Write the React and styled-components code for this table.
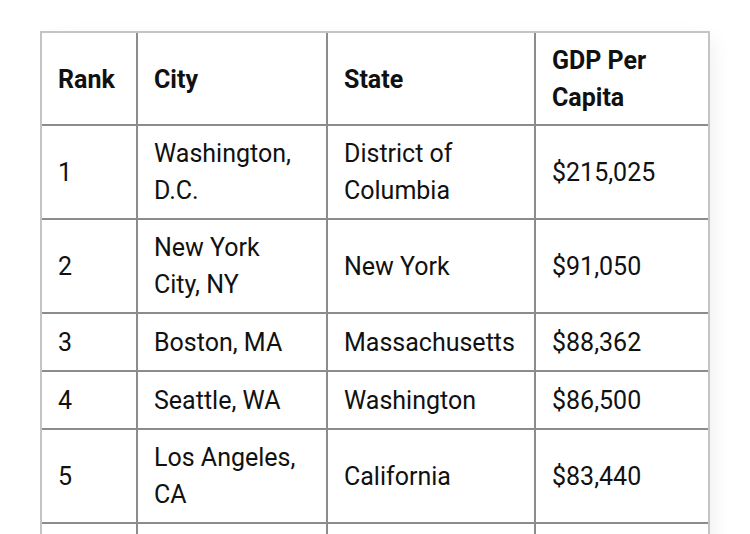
import React from "react";
import styled, { createGlobalStyle } from "styled-components";

const GlobalStyle = createGlobalStyle`
	html, body {
		margin: 0;
		padding: 0;
		background: #ffffff;
		overflow: hidden;
	}
	body {
		font-family: Roboto, "Liberation Sans", sans-serif;
		color: #111111;
	}
`;

const rows = [
	["1", "Washington, D.C.", "District of Columbia", "$215,025"],
	["2", "New York City, NY", "New York", "$91,050"],
	["3", "Boston, MA", "Massachusetts", "$88,362"],
	["4", "Seattle, WA", "Washington", "$86,500"],
	["5", "Los Angeles, CA", "California", "$83,440"],
];

const App = () => {
	return (
		<Page>
			<GlobalStyle />
			<Frame>
				<Table>
					<colgroup>
						<col style={{ width: 95 }} />
						<col style={{ width: 190 }} />
						<col style={{ width: 208 }} />
						<col style={{ width: 173 }} />
					</colgroup>
					<thead>
						<tr>
							<Head>Rank</Head>
							<Head>City</Head>
							<Head>State</Head>
							<Head>GDP Per Capita</Head>
						</tr>
					</thead>
					<tbody>
						{rows.map((r) => (
							<tr key={r[0]}>
								{r.map((c, i) => (
									<Cell key={i}>{c}</Cell>
								))}
							</tr>
						))}
						<tr>
							<Cell />
							<Cell />
							<Cell />
							<Cell />
						</tr>
					</tbody>
				</Table>
			</Frame>
		</Page>
	);
};

const Page = styled.div`
	height: 534px;
	padding: 31px 0 0 40px;
	box-sizing: border-box;
`;

const Frame = styled.div`
	width: 666px;
	box-shadow: 10px 0 20px -8px rgba(0, 0, 0, 0.07);
	border: 2px solid #c4c4c4;
	border-bottom: none;
`;

const Table = styled.table`
	width: 100%;
	border-collapse: collapse;
	table-layout: fixed;
	font-size: 25px;
	line-height: 37px;
	tr + tr td,
	thead + tbody tr:first-child td {
		border-top: 2px solid #8c8c8c;
	}
	td + td,
	th + th {
		border-left: 2px solid #8c8c8c;
	}
`;

const Head = styled.th`
	text-align: left;
	font-weight: 700;
	padding: 9px 16px 8px;
	height: 74px;
	vertical-align: middle;
`;

const Cell = styled.td`
	padding: 9px 16px 9px;
	height: 38px;
	vertical-align: middle;
	font-weight: 400;
`;

export default App;
